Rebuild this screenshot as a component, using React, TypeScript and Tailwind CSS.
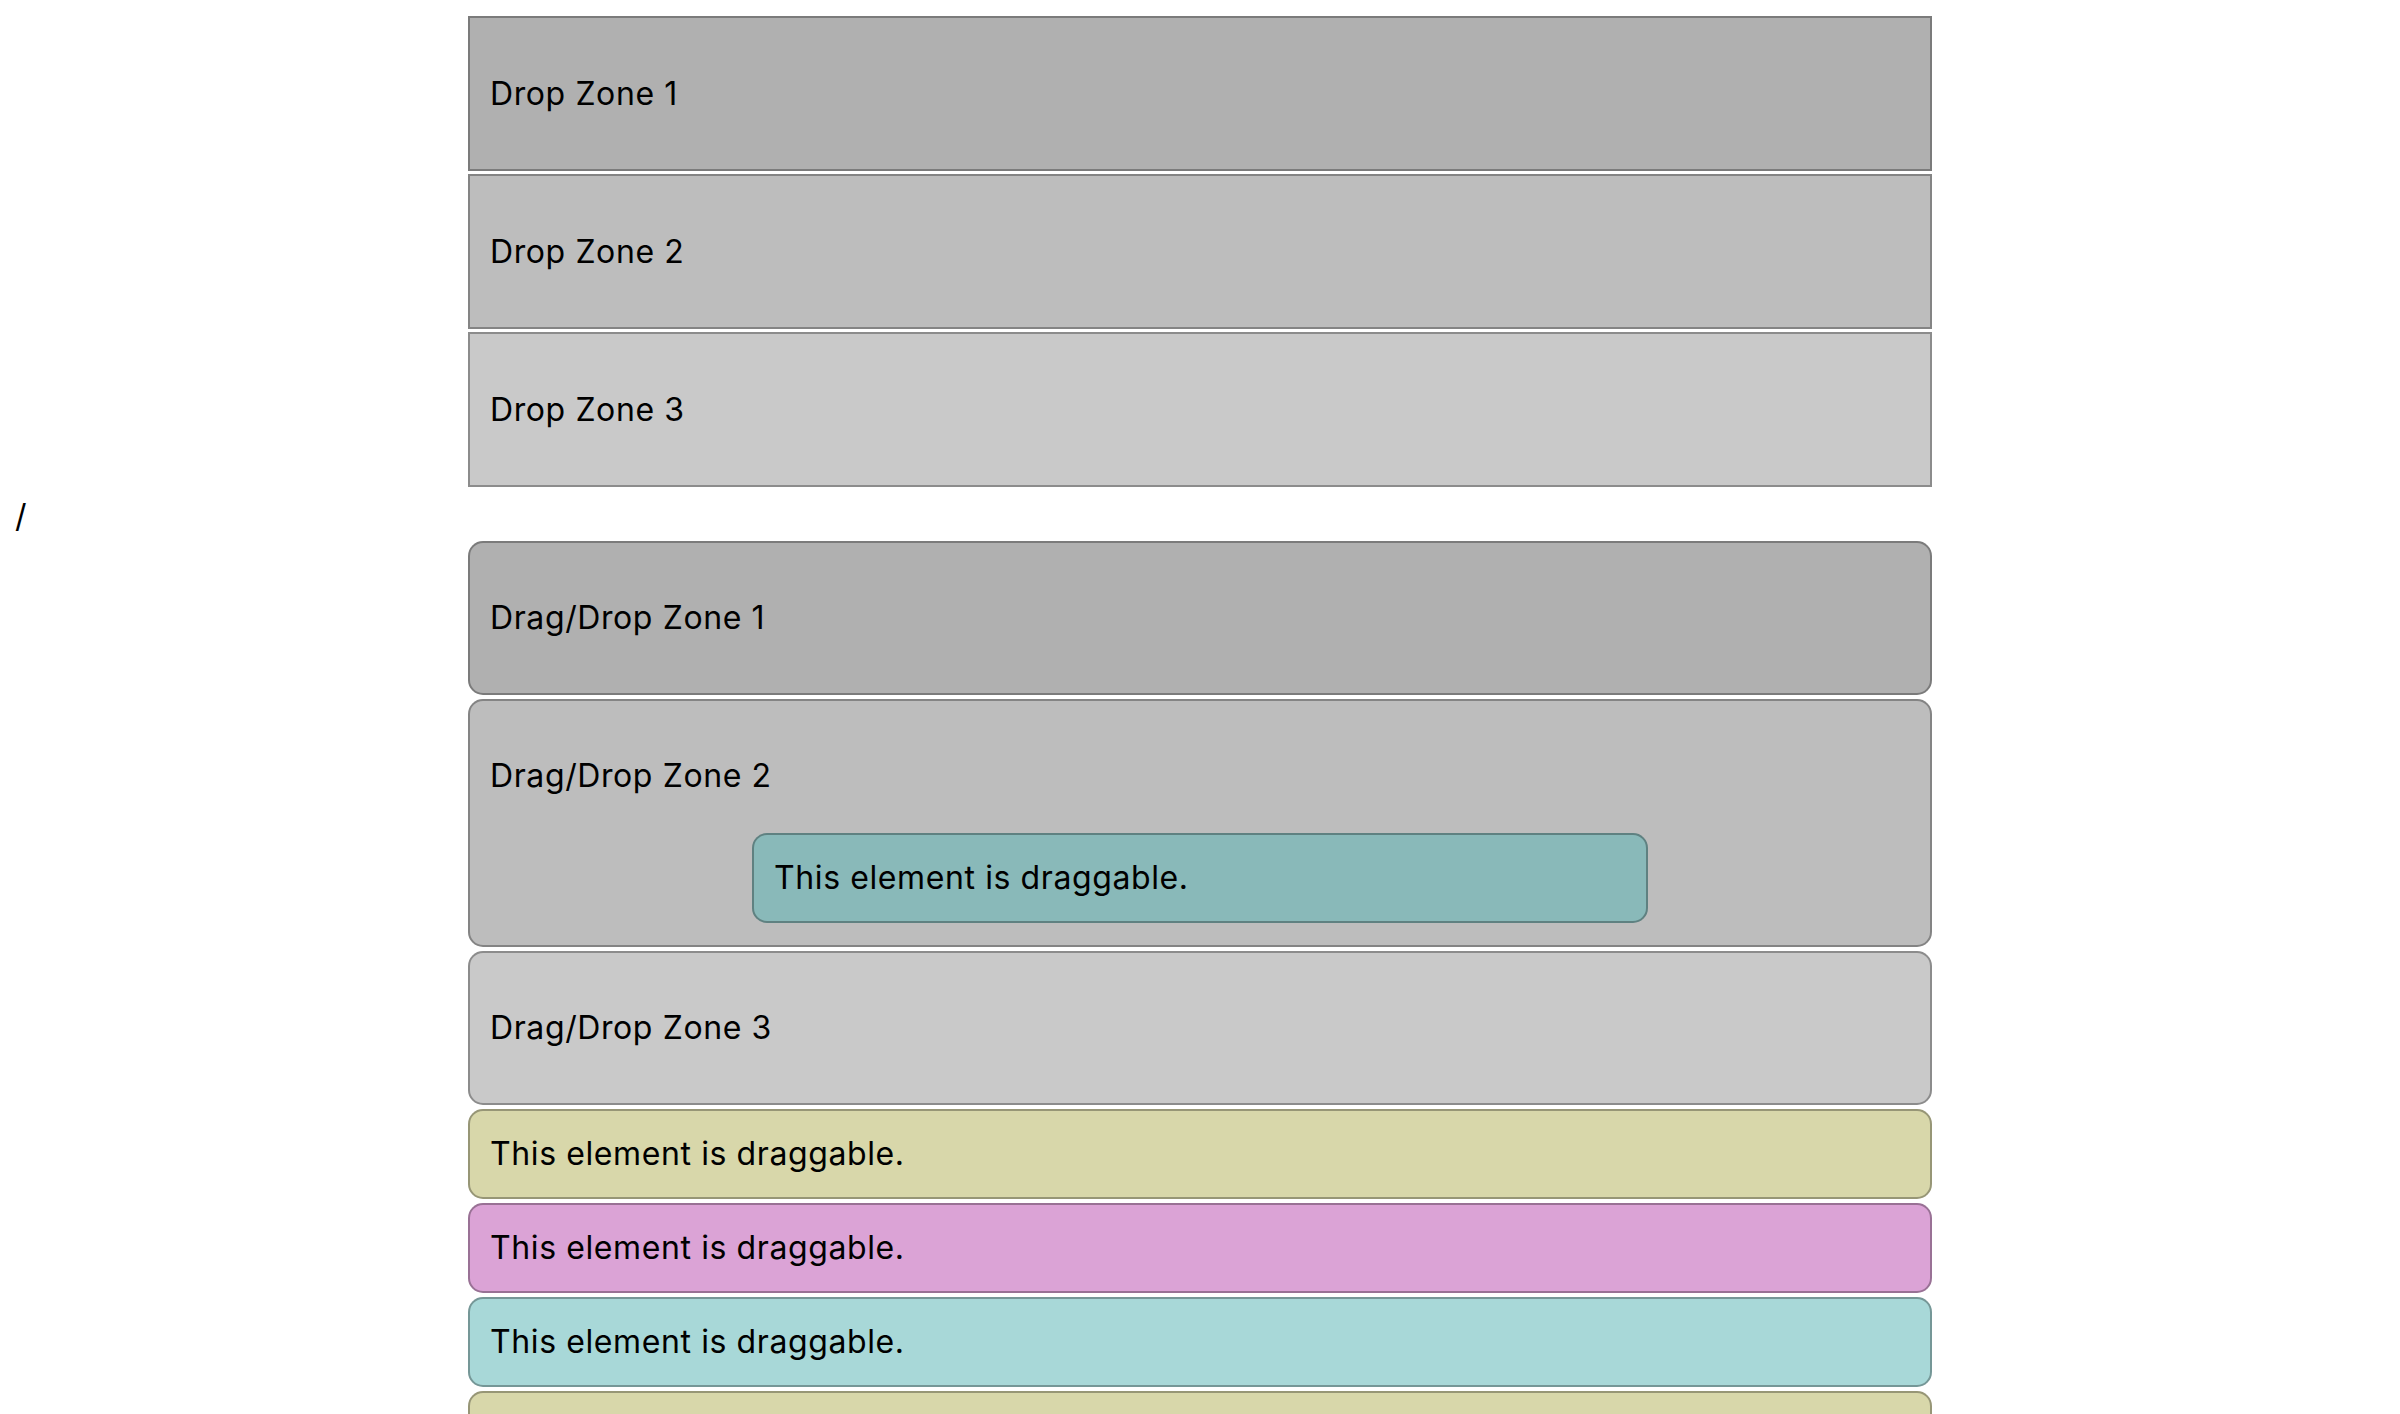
const dropZones = [
  { label: 'Drop Zone 1', bg: 'bg-[#b0b0b0]' },
  { label: 'Drop Zone 2', bg: 'bg-[#bdbdbd]' },
  { label: 'Drop Zone 3', bg: 'bg-[#c9c9c9]' },
]

const draggables = [
  'bg-[#d8d7aa]',
  'bg-[#dba3d6]',
  'bg-[#a8d8d8]',
  'bg-[#d8d7aa]',
  'bg-[#dba3d6]',
  'bg-[#a8d8d8]',
]

function Draggable({ bg, className = '' }: { bg: string; className?: string }) {
  return (
    <div
      className={`h-[90px] flex items-center px-[20px] rounded-[15px] border-2 border-black/30 ${bg} ${className}`}
    >
      This element is draggable.
    </div>
  )
}

export default function App() {
  return (
    <div
      className="min-h-screen bg-white text-black text-[32px] tracking-[0.6px] leading-[48px] pt-[16px]"
      style={{ fontFamily: 'Inter, "Noto Sans CJK JP", sans-serif' }}
    >
      {/* plain drop zones */}
      <div className="w-[1464px] mx-auto flex flex-col gap-[3px]">
        {dropZones.map(z => (
          <div
            key={z.label}
            className={`h-[155px] flex items-center px-[20px] border-2 border-black/30 ${z.bg}`}
          >
            {z.label}
          </div>
        ))}
      </div>

      <div className="h-[54px] pt-[5px] pl-[15px]">/</div>

      {/* drag/drop zones */}
      <div className="w-[1464px] mx-auto flex flex-col gap-[4px]">
        <div className="px-[20px] py-[20px] rounded-[15px] border-2 border-black/30 bg-[#b0b0b0]">
          <div className="h-[110px] flex items-center">Drag/Drop Zone 1</div>
        </div>
        <div className="px-[20px] py-[20px] rounded-[15px] border-2 border-black/30 bg-[#bdbdbd]">
          <div className="h-[110px] flex items-center">Drag/Drop Zone 2</div>
          <Draggable bg="bg-[#89b9b9]" className="w-[896px] mx-auto my-[2px]" />
        </div>
        <div className="px-[20px] py-[20px] rounded-[15px] border-2 border-black/30 bg-[#c9c9c9]">
          <div className="h-[110px] flex items-center">Drag/Drop Zone 3</div>
        </div>
        {draggables.map((bg, i) => (
          <Draggable key={i} bg={bg} />
        ))}
      </div>
    </div>
  )
}
